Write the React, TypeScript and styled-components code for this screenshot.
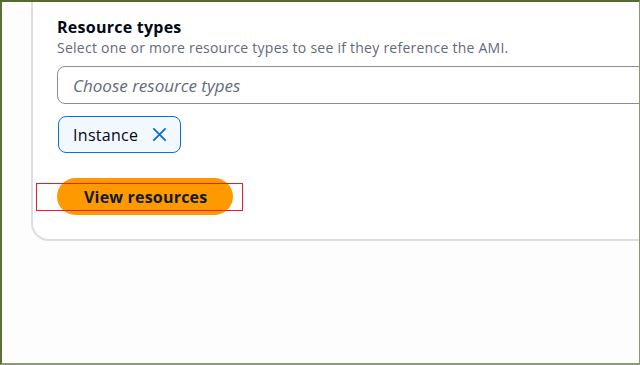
import styled, { createGlobalStyle } from "styled-components";

const GlobalStyle = createGlobalStyle`
  html, body {
    margin: 0;
    padding: 0;
    background: #fdfdfd;
  }
  body {
    font-family: "Open Sans", "Noto Sans", sans-serif;
    color: #000716;
  }
`;

export default function App() {
  return (
    <>
      <GlobalStyle />
      <Frame>
        <Card>
          <Field>
            <Label>Resource types</Label>
            <Description>
              Select one or more resource types to see if they reference the AMI.
            </Description>
            <Select>
              <Placeholder>Choose resource types</Placeholder>
            </Select>
          </Field>
          <TokenList>
            <Token>
              <span>Instance</span>
              <DismissIcon viewBox="0 0 16 16" aria-hidden="true">
                <path d="M2 2l12 12M14 2L2 14" />
              </DismissIcon>
            </Token>
          </TokenList>
          <Actions>
            <Highlight />
            <PrimaryButton>View resources</PrimaryButton>
          </Actions>
        </Card>
      </Frame>
    </>
  );
}

const Frame = styled.div`
  box-sizing: border-box;
  width: 640px;
  height: 365px;
  border-top: 2px solid #56692f;
  border-left: 2px solid #5c6f36;
  border-right: 1px solid #8b9378;
  border-bottom: 2px solid #8e9a74;
  background: #fdfdfd;
  overflow: hidden;
  padding-left: 29px;
`;

const Card = styled.div`
  box-sizing: border-box;
  width: 640px;
  padding: 14px 0 24px 24px;
  background: #fff;
  border: 2px solid #dcdee2;
  border-top: none;
  border-radius: 0 0 18px 18px;
  display: flex;
  flex-direction: column;
`;

const Field = styled.div`
  display: flex;
  flex-direction: column;
`;

const Label = styled.div`
  font-size: 16px;
  font-weight: 700;
  line-height: 22px;
  letter-spacing: 0.25px;
  color: #000716;
`;

const Description = styled.div`
  font-size: 14px;
  line-height: 20px;
  letter-spacing: 0.25px;
  color: #5f6b7a;
`;

const Select = styled.div`
  box-sizing: border-box;
  height: 38px;
  margin-top: 8px;
  width: 600px;
  border: 1.5px solid #8c8c94;
  border-radius: 8px;
  display: flex;
  align-items: center;
  padding-left: 15px;
`;

const Placeholder = styled.span`
  font-size: 17px;
  font-style: italic;
  color: #5f6b7a;
`;

const TokenList = styled.div`
  display: flex;
  margin-top: 12px;
  padding-left: 1px;
`;

const Token = styled.div`
  box-sizing: border-box;
  height: 37px;
  display: flex;
  align-items: center;
  gap: 14px;
  padding: 0 13px 0 14px;
  background: #f2f8fd;
  border: 1.5px solid #0972d3;
  border-radius: 8px;
  font-size: 16px;
  letter-spacing: 0.3px;
  color: #000716;
`;

const DismissIcon = styled.svg`
  width: 15px;
  height: 15px;
  fill: none;
  stroke: #0972d3;
  stroke-width: 2;
  stroke-linecap: round;
`;

const Actions = styled.div`
  position: relative;
  display: flex;
  margin-top: 25px;
`;

const PrimaryButton = styled.button`
  box-sizing: border-box;
  height: 37px;
  padding: 0 26px 0 27px;
  border: none;
  border-radius: 20px;
  background: #ff9900;
  font-family: "Open Sans", "Noto Sans", sans-serif;
  font-size: 16px;
  font-weight: 700;
  letter-spacing: 0.2px;
  color: #0f1b2a;
  cursor: pointer;
`;

const Highlight = styled.div`
  position: absolute;
  left: -21px;
  top: 5px;
  width: 207px;
  height: 28px;
  box-sizing: border-box;
  border: 1.5px solid #ee1c24;
  z-index: 1;
  pointer-events: none;
`;
